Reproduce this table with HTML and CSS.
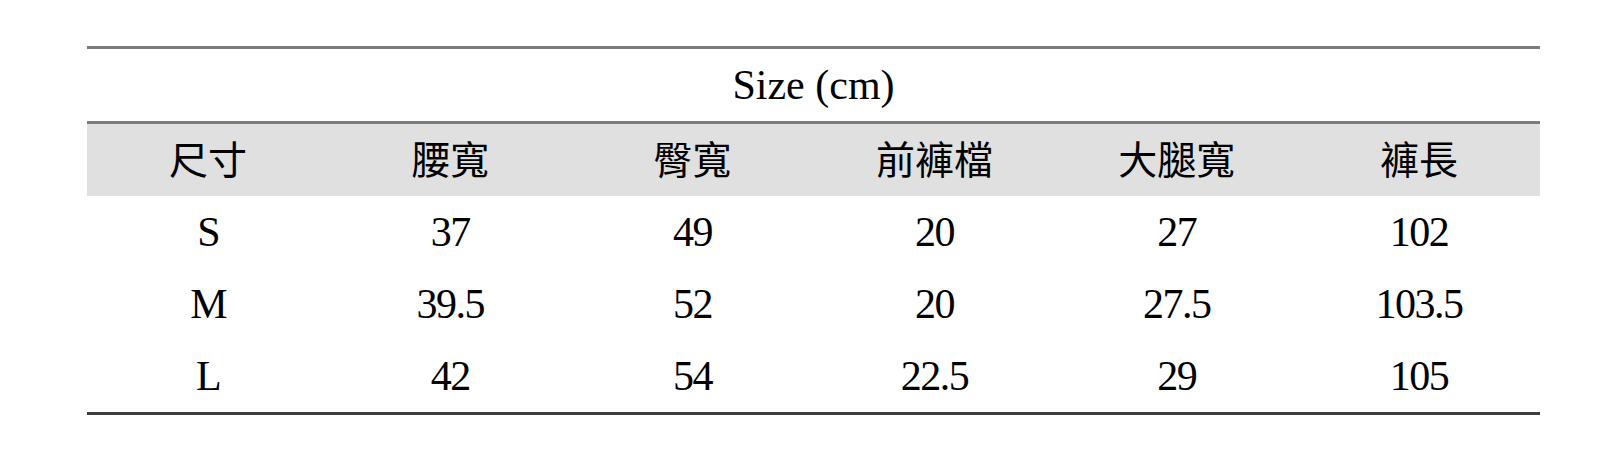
FILE: index.html
```html
<!DOCTYPE html>
<html>
<head>
<meta charset="utf-8">
<title>Size (cm)</title>
<link rel="stylesheet" href="styles.css">
</head>
<body>
<div class="wrap">
  <table class="size-table">
    <thead>
      <tr class="caption-row"><th colspan="6">Size (cm)</th></tr>
      <tr class="head-row">
        <th>尺寸</th><th>腰寬</th><th>臀寬</th><th>前褲檔</th><th>大腿寬</th><th>褲長</th>
      </tr>
    </thead>
    <tbody>
      <tr><td>S</td><td>37</td><td>49</td><td>20</td><td>27</td><td>102</td></tr>
      <tr><td>M</td><td>39.5</td><td>52</td><td>20</td><td>27.5</td><td>103.5</td></tr>
      <tr><td>L</td><td>42</td><td>54</td><td>22.5</td><td>29</td><td>105</td></tr>
    </tbody>
  </table>
</div>
</body>
</html>
```
FILE: styles.css
```css
html, body {
  margin: 0;
  padding: 0;
  background: #ffffff;
}
.wrap {
  padding: 46px 0 0 87px;
}
.size-table {
  width: 1453px;
  border-spacing: 0;
  border-collapse: separate;
  table-layout: fixed;
  border-top: 3px solid #7c7c7c;
  border-bottom: 3px solid #3e3e3e;
  font-family: "Liberation Serif", "Times New Roman", "Noto Sans CJK TC", serif;
  font-size: 42px;
  color: #000000;
}
.size-table th,
.size-table td {
  height: 72px;
  padding: 0;
  text-align: center;
  vertical-align: middle;
  font-weight: normal;
  line-height: 1;
}
.size-table td {
  letter-spacing: -1.5px;
}
.caption-row th {
  border-bottom: 3px solid #7c7c7c;
}
.head-row th {
  background: #e0e0e0;
  font-size: 39px;
}
```
